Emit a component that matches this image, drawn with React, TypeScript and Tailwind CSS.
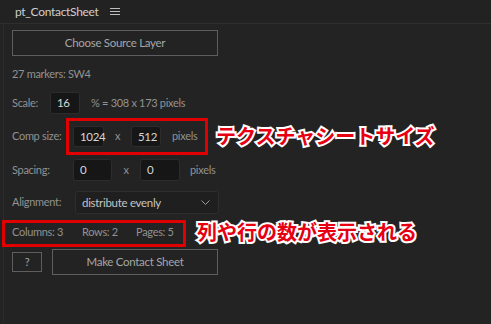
import React from "react";

const font = "font-['Lato','Open_Sans',sans-serif]";

const Field = ({ value, w }: { value: string; w: string }) => (
  <div className={`${w} shrink-0 h-full flex items-center pl-[6px] bg-[#161616] border border-[#2c2c2c] rounded-[3px] text-[#d6d6d6] text-[11.5px]`}>
    {value}
  </div>
);

const Note = ({ text, cls }: { text: string; cls: string }) => (
  <div
    className={`absolute ${cls} text-[20px] font-bold leading-none tracking-normal whitespace-nowrap text-[#e60012] font-['Noto_Sans_CJK_JP',sans-serif] [paint-order:stroke_fill] [-webkit-text-stroke:4px_white]`}
  >
    {text}
  </div>
);

const App = () => {
  return (
    <div className={`relative w-[491px] h-[324px] bg-[#232323] overflow-hidden ${font} text-[11px] tracking-[-0.3px] text-[#929292]`}>
      <div className="h-[24px] border-b border-[#2f2f2f] flex items-center pl-[15px] gap-[11px] bg-[#222222]">
        <span className="text-[#cfcfcf] text-[12px]">pt_ContactSheet</span>
        <svg width="10" height="9" viewBox="0 0 10 9">
          <path d="M0 1.5h10M0 4.5h10M0 7.5h10" stroke="#bdbdbd" strokeWidth="1" />
        </svg>
      </div>
      <div className="ml-[3px] border-l border-[#2c2c2c] h-[299px] pl-[8px] pt-[6px] flex flex-col">
        <div className="w-[206px] h-[26px] border border-[#5e5e5e] flex items-center justify-center text-[#a6a6a6] text-[11.5px]">
          Choose Source Layer
        </div>
        <div className="mt-[9px] h-[18px] flex items-center">27 markers: SW4</div>
        <div className="mt-[9px] h-[22px] flex items-center">
          <span className="w-[38px] shrink-0">Scale:</span>
          <Field value="16" w="w-[30px]" />
          <span className="ml-[11px]">% = 308 x 173 pixels</span>
        </div>
        <div className="mt-[12px] h-[21px] flex items-center">
          <span className="w-[61px] shrink-0">Comp size:</span>
          <Field value="1024" w="w-[31px]" />
          <span className="w-[27px] shrink-0 text-center">x</span>
          <Field value="512" w="w-[30px]" />
          <span className="ml-[11px]">pixels</span>
        </div>
        <div className="mt-[12px] h-[22px] flex items-center">
          <span className="w-[61px] shrink-0">Spacing:</span>
          <Field value="0" w="w-[39px]" />
          <span className="w-[28px] shrink-0 text-center">x</span>
          <Field value="0" w="w-[40px]" />
          <span className="ml-[10px]">pixels</span>
        </div>
        <div className="mt-[10px] h-[23px] flex items-center">
          <span className="w-[63px] shrink-0">Alignment:</span>
          <div className="w-[144px] h-full flex items-center justify-between pl-[6px] pr-[8px] bg-[#1f1f1f] border border-[#2e2e2e] rounded-[3px] text-[#c4c4c4] text-[11.5px]">
            distribute evenly
            <svg width="9" height="5" viewBox="0 0 9 5">
              <path d="M0.5 0.5l4 4 4-4" stroke="#9a9a9a" fill="none" strokeWidth="1" />
            </svg>
          </div>
        </div>
        <div className="mt-[9px] h-[18px] flex items-center">
          <span className="w-[70px] shrink-0">Columns: 3</span>
          <span className="w-[54px] shrink-0">Rows: 2</span>
          <span>Pages: 5</span>
        </div>
        <div className="mt-[8px] h-[26px] flex items-center gap-[10px]">
          <div className="w-[30px] h-[20px] border border-[#5e5e5e] flex items-center justify-center text-[#a6a6a6]">?</div>
          <div className="w-[166px] h-[26px] border border-[#5e5e5e] flex items-center justify-center text-[#a6a6a6] text-[11.5px]">
            Make Contact Sheet
          </div>
        </div>
      </div>

      <div className="absolute left-[66px] top-[118px] w-[142px] h-[37px] border-[3px] border-[#e00000]" />
      <div className="absolute left-[2px] top-[220px] w-[184px] h-[27px] border-[3px] border-[#e00000]" />
      <Note text="テクスチャシートサイズ" cls="left-[216px] top-[126px]" />
      <Note text="列や行の数が表示される" cls="left-[197px] top-[222px]" />
    </div>
  );
};

export default App;
